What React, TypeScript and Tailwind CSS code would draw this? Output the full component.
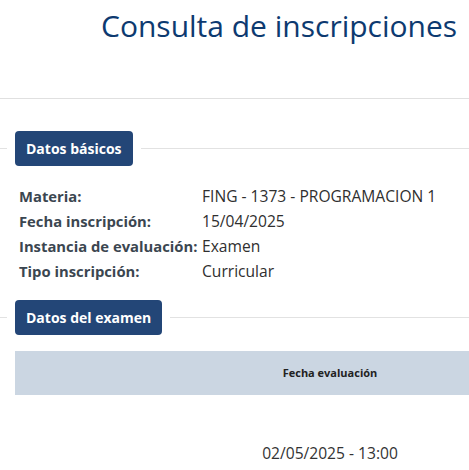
const rows: [string, string][] = [
  ['Materia:', 'FING - 1373 - PROGRAMACION 1'],
  ['Fecha inscripción:', '15/04/2025'],
  ['Instancia de evaluación:', 'Examen'],
  ['Tipo inscripción:', 'Curricular'],
];

function Legend({ title }: { title: string }) {
  return (
    <div className="flex items-center">
      <div className="h-px w-[7px] bg-[#e2e2e2]" />
      <div className="mx-2 rounded bg-[#234677] px-[11px] py-[7px] text-[14px] leading-[21px] font-bold text-white">
        {title}
      </div>
      <div className="h-px flex-1 bg-[#e2e2e2]" />
    </div>
  );
}

export default function App() {
  return (
    <div
      className="h-[470px] w-[469px] overflow-hidden bg-white text-[#333]"
      style={{ fontFamily: '"Open Sans", "Noto Sans", sans-serif' }}
    >
      <header className="h-[99px] border-b border-[#e0e0e0] pl-[101px] pt-[5px]">
        <h1 className="text-[30px] leading-[42px] text-[#0d3a70] whitespace-nowrap">Consulta de inscripciones</h1>
      </header>

      <section className="pt-[32px]">
        <Legend title="Datos básicos" />
        <div className="space-y-[3px] pt-[19px] pl-[19px] leading-[22px]">
          {rows.map(([label, value]) => (
            <div key={label} className="flex items-baseline">
              <span className="w-[183px] text-[14.8px] font-bold text-[#3b4650] whitespace-nowrap">{label}</span>
              <span className="text-[15.6px] text-[#2f2f2f] whitespace-nowrap">{value}</span>
            </div>
          ))}
        </div>
      </section>

      <section className="pt-[18px]">
        <Legend title="Datos del examen" />
        <div className="mt-[16px] ml-[15px] w-[630px]">
          <div className="flex h-[44px] items-center justify-center bg-[#cbd6e2] text-[11px] font-bold text-[#222]">
            Fecha evaluación
          </div>
          <div className="flex h-[118px] items-center justify-center text-[15.6px] text-[#333]">
            02/05/2025 - 13:00
          </div>
        </div>
      </section>
    </div>
  );
}
